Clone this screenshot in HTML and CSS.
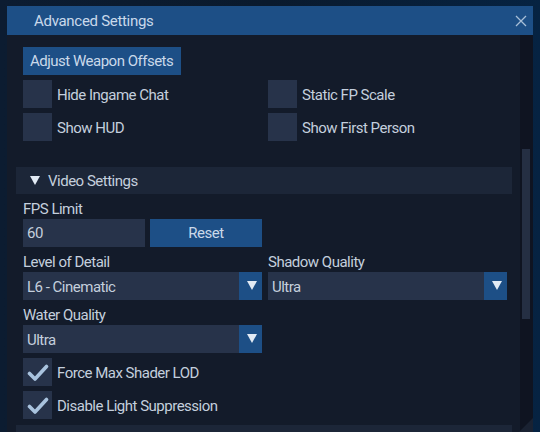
FILE: index.html
```html
<!DOCTYPE html>
<html>
<head>
<meta charset="utf-8">
<link rel="stylesheet" href="styles.css">
</head>
<body>
<div class="window">
  <div class="titlebar">
    <span class="title">Advanced Settings</span>
    <svg class="close" width="12" height="12" viewBox="0 0 12 12"><path d="M1 1L11 11M11 1L1 11" stroke="#a8bfd8" stroke-width="1.3" fill="none"/></svg>
  </div>
  <div class="body">
    <div class="content">
      <div class="section-body top">
        <div class="btn weapon">Adjust Weapon Offsets</div>
        <div class="grid checks">
          <div class="check"><span class="box"></span><span>Hide Ingame Chat</span></div>
          <div class="check"><span class="box"></span><span>Static FP Scale</span></div>
          <div class="check"><span class="box"></span><span>Show HUD</span></div>
          <div class="check"><span class="box"></span><span>Show First Person</span></div>
        </div>
      </div>
      <div class="section-header"><span class="tri"></span>Video Settings</div>
      <div class="section-body">
        <div class="label">FPS Limit</div>
        <div class="fps-row">
          <div class="input">60</div>
          <div class="btn reset">Reset</div>
        </div>
        <div class="grid">
          <div>
            <div class="label">Level of Detail</div>
            <div class="select"><span>L6 - Cinematic</span><span class="arrow"></span></div>
          </div>
          <div>
            <div class="label">Shadow Quality</div>
            <div class="select"><span>Ultra</span><span class="arrow"></span></div>
          </div>
          <div>
            <div class="label">Water Quality</div>
            <div class="select"><span>Ultra</span><span class="arrow"></span></div>
          </div>
        </div>
        <div class="check tick"><span class="box"><svg width="22" height="18" viewBox="0 0 22 18"><path d="M2.5 9.5L8 15L19.5 2.5" stroke="#a9c3de" stroke-width="3.6" fill="none" stroke-linecap="round" stroke-linejoin="round"/></svg></span><span>Force Max Shader LOD</span></div>
        <div class="check tick"><span class="box"><svg width="22" height="18" viewBox="0 0 22 18"><path d="M2.5 9.5L8 15L19.5 2.5" stroke="#a9c3de" stroke-width="3.6" fill="none" stroke-linecap="round" stroke-linejoin="round"/></svg></span><span>Disable Light Suppression</span></div>
      </div>
      <div class="section-header next"></div>
    </div>
    <div class="scrolltrack"><div class="thumb"></div></div>
    <svg class="grip" width="14" height="14" viewBox="0 0 14 14"><path d="M14 0L14 14L0 14Z" fill="#1a2232"/></svg>
  </div>
</div>
</body>
</html>
```

FILE: styles.css
```css
html, body {
  margin: 0;
  padding: 0;
}
body {
  width: 540px;
  height: 432px;
  overflow: hidden;
  background: linear-gradient(90deg, #0c1c31 0%, #0a1a2d 50%, #062342 100%);
  font-family: Roboto, "Noto Sans", sans-serif;
  font-size: 15px;
  letter-spacing: -0.5px;
  color: #c4cfdd;
}
.window {
  margin: 6px 0 0 7px;
  width: 526px;
  height: 426px;
  display: flex;
  flex-direction: column;
}
.titlebar {
  height: 29px;
  background: #1d4f86;
  display: flex;
  align-items: center;
  justify-content: space-between;
  padding: 0 6px 0 27px;
  flex-shrink: 0;
}
.title {
  color: #c9d9eb;
  font-size: 15px;
  letter-spacing: -0.3px;
}
.close {
  display: block;
}
.body {
  flex: 1;
  display: flex;
  background: #131b2a;
  position: relative;
  overflow: hidden;
}
.content {
  width: 505px;
  padding: 12px 0 0 9px;
}
.scrolltrack {
  margin-left: auto;
  width: 13px;
  background: #0f1421;
  padding-top: 114px;
  display: flex;
  justify-content: center;
}
.thumb {
  width: 8px;
  height: 170px;
  background: #252f43;
  margin-left: -1px;
}
.grip {
  position: absolute;
  right: 0;
  bottom: 0;
}
.section-body {
  padding: 0 5px 0 7px;
  display: flex;
  flex-direction: column;
}
.section-body.top {
  padding-bottom: 26px;
}
.btn {
  background: #1d4f86;
  color: #cad9ea;
  height: 28px;
  line-height: 29px;
}
.weapon {
  align-self: flex-start;
  padding: 0 8px 0 7px;
}
.grid {
  display: grid;
  grid-template-columns: 239px 239px;
  column-gap: 6px;
}
.checks {
  margin-top: 5px;
  row-gap: 5px;
}
.check {
  display: flex;
  align-items: center;
  height: 28px;
  gap: 5px;
}
.check > span:last-child {
  margin-top: 2px;
}
.box {
  width: 29px;
  height: 28px;
  background: #27334a;
  display: flex;
  align-items: center;
  justify-content: center;
  flex-shrink: 0;
}
.box svg {
  display: block;
  margin-top: 1px;
}
.section-header {
  width: 496px;
  height: 27px;
  background: #1c2638;
  display: flex;
  align-items: center;
}
.section-header.next {
  margin-top: 6px;
}
.tri {
  width: 0;
  height: 0;
  border-left: 5px solid transparent;
  border-right: 5px solid transparent;
  border-top: 9px solid #e2ebf5;
  margin: 0 8px 0 14px;
}
.label {
  height: 25px;
  line-height: 20px;
  padding-top: 5px;
  box-sizing: border-box;
  display: flex;
  align-items: flex-end;
}
.fps-row {
  display: flex;
  gap: 5px;
}
.input {
  width: 122px;
  height: 28px;
  line-height: 29px;
  background: #27334a;
  padding-left: 4px;
  box-sizing: border-box;
}
.reset {
  width: 112px;
  text-align: center;
}
.select {
  height: 28px;
  background: #27334a;
  display: flex;
  align-items: center;
  justify-content: space-between;
  padding-left: 4px;
}
.select > span:first-child {
  margin-top: 2px;
}
.arrow {
  width: 23px;
  height: 28px;
  background: #1d4f86;
  position: relative;
}
.arrow::after {
  content: "";
  position: absolute;
  left: 8px;
  top: 9px;
  border-left: 5px solid transparent;
  border-right: 5px solid transparent;
  border-top: 9px solid #e2ebf5;
}
.tick {
  margin-top: 5px;
}
```
